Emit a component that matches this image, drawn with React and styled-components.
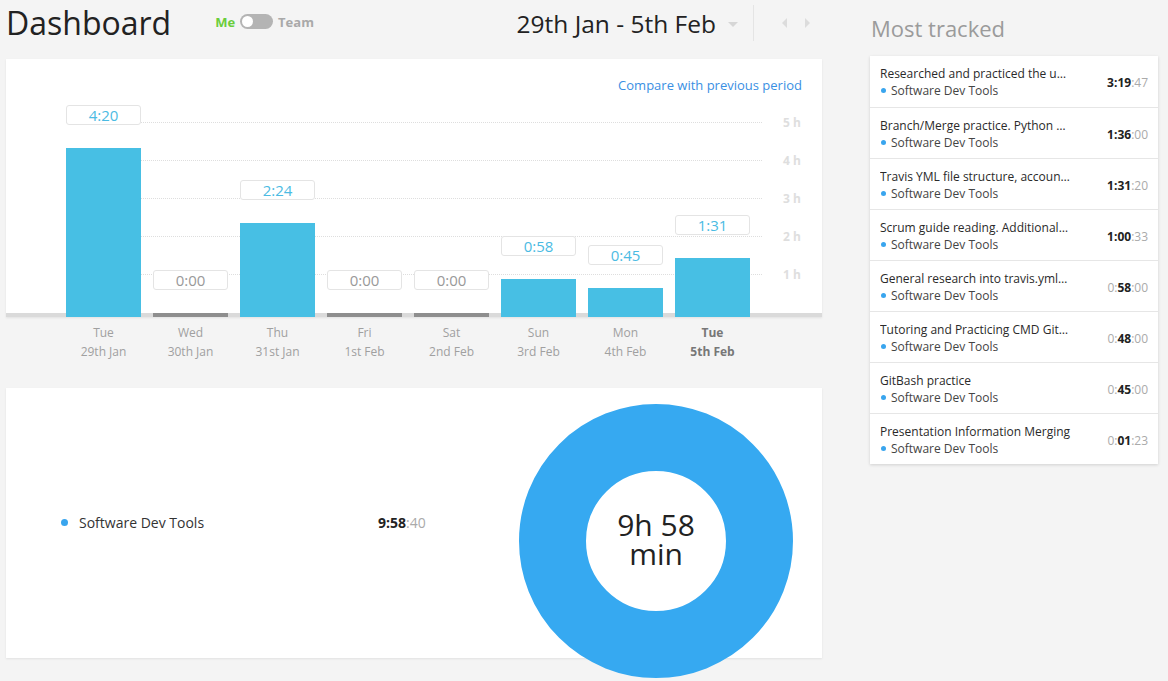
import React from 'react';
import styled, { createGlobalStyle } from 'styled-components';

const GlobalStyle = createGlobalStyle`
  html, body {
    margin: 0;
    padding: 0;
    background: #f4f4f4;
    font-family: 'Open Sans', 'Liberation Sans', sans-serif;
    color: #222;
  }
  #root {
    min-height: 100vh;
  }
`;

const days = [
  { day: 'Tue', date: '29th Jan', label: '4:20', hours: 4.333 },
  { day: 'Wed', date: '30th Jan', label: '0:00', hours: 0 },
  { day: 'Thu', date: '31st Jan', label: '2:24', hours: 2.4 },
  { day: 'Fri', date: '1st Feb', label: '0:00', hours: 0 },
  { day: 'Sat', date: '2nd Feb', label: '0:00', hours: 0 },
  { day: 'Sun', date: '3rd Feb', label: '0:58', hours: 0.967 },
  { day: 'Mon', date: '4th Feb', label: '0:45', hours: 0.75 },
  { day: 'Tue', date: '5th Feb', label: '1:31', hours: 1.517, current: true },
];

const tracked = [
  { title: 'Researched and practiced the u…', time: ['', '3:19', ':47'] },
  { title: 'Branch/Merge practice. Python …', time: ['', '1:36', ':00'] },
  { title: 'Travis YML file structure, accoun…', time: ['', '1:31', ':20'] },
  { title: 'Scrum guide reading. Additional…', time: ['', '1:00', ':33'] },
  { title: 'General research into travis.yml…', time: ['0:', '58', ':00'] },
  { title: 'Tutoring and Practicing CMD Git…', time: ['0:', '48', ':00'] },
  { title: 'GitBash practice', time: ['0:', '45', ':00'] },
  { title: 'Presentation Information Merging', time: ['0:', '01', ':23'] },
];

const Page = styled.div`
  display: flex;
  align-items: flex-start;
  padding-left: 6px;
  padding-bottom: 24px;
`;

const Main = styled.div`
  width: 816px;
`;

const Header = styled.header`
  height: 46px;
  display: flex;
  align-items: center;
  margin-bottom: 13px;
`;

const Title = styled.h1`
  margin: 0;
  font-size: 32px;
  line-height: 44px;
  font-weight: 400;
  color: #222;
`;

const Switcher = styled.div`
  display: flex;
  align-items: center;
  gap: 5px;
  margin-left: 44px;
  margin-top: -3px;
  font-size: 13px;
  font-weight: 700;
`;

const SwitchLabel = styled.span`
  color: ${p => (p.$active ? '#6acd3c' : '#a9a9a9')};
`;

const Toggle = styled.span`
  width: 33px;
  height: 15px;
  border-radius: 8px;
  background: #b4b4b4;
  display: flex;
  align-items: center;
  padding: 0 2px;
  box-sizing: border-box;
  &::before {
    content: '';
    width: 11px;
    height: 11px;
    border-radius: 50%;
    background: #fff;
  }
`;

const DateRange = styled.div`
  margin-left: auto;
  font-size: 24.5px;
  color: #222;
`;

const Caret = styled.span`
  margin-left: 12px;
  margin-top: 2px;
  width: 0;
  height: 0;
  border-left: 5px solid transparent;
  border-right: 5px solid transparent;
  border-top: 5px solid #d6d6d6;
`;

const Divider = styled.span`
  width: 1px;
  height: 36px;
  background: #e4e4e4;
  margin-left: 15px;
`;

const Nav = styled.div`
  display: flex;
  align-items: center;
  gap: 18px;
  margin-left: 28px;
  margin-right: 12px;
`;

const Arrow = styled.span`
  width: 0;
  height: 0;
  border-top: 5px solid transparent;
  border-bottom: 5px solid transparent;
  ${p => (p.$dir === 'left' ? 'border-right: 5px solid #dcdcdc;' : 'border-left: 5px solid #dcdcdc;')}
`;

const ChartCard = styled.section`
  background: linear-gradient(to top, #dadada 4px, #fff 4px);
  box-shadow: 0 1px 2px rgba(0, 0, 0, 0.08);
  padding: 18px 0 0 60px;
`;

const CompareRow = styled.div`
  display: flex;
  justify-content: flex-end;
  align-items: flex-start;
  padding-right: 20px;
  height: 18px;
  line-height: 16px;
`;

const CompareLink = styled.a`
  font-size: 13px;
  color: #3a8fe3;
  text-decoration: none;
`;

const Plot = styled.div`
  position: relative;
  height: 222px;
`;

const GridLine = styled.div`
  position: absolute;
  left: 0;
  width: 696px;
  border-top: 1px dotted #dedede;
`;

const AxisLabel = styled.span`
  position: absolute;
  left: 717px;
  font-size: 12px;
  font-weight: 700;
  color: #dedede;
  line-height: 14px;
`;

const Columns = styled.div`
  position: relative;
  height: 100%;
  display: flex;
  align-items: flex-end;
  gap: 12px;
`;

const Column = styled.div`
  width: 75px;
  display: flex;
  flex-direction: column;
  align-items: stretch;
`;

const ValueBox = styled.div`
  height: 18px;
  line-height: 18px;
  border: 1px solid #e4e4e4;
  border-radius: 3px;
  background: #fff;
  text-align: center;
  font-size: 15px;
  color: ${p => (p.$empty ? '#999' : '#4bbbe3')};
  margin-bottom: 23px;
`;

const Bar = styled.div`
  background: ${p => (p.$empty ? '#8e8e8e' : '#47bfe4')};
`;

const DayLabels = styled.div`
  display: flex;
  gap: 12px;
  padding: 6px 0 0 60px;
`;

const DayLabel = styled.div`
  width: 75px;
  text-align: center;
  font-size: 12px;
  line-height: 19px;
  color: ${p => (p.$current ? '#777' : '#a0a0a0')};
  font-weight: ${p => (p.$current ? 700 : 400)};
`;

const SummaryCard = styled.section`
  margin-top: 27px;
  height: 270px;
  background: #fff;
  box-shadow: 0 1px 2px rgba(0, 0, 0, 0.08);
  display: flex;
  align-items: center;
  padding-left: 55px;
  box-sizing: border-box;
  overflow: visible;
`;

const Legend = styled.div`
  display: grid;
  grid-template-columns: 7px 288px auto;
  column-gap: 11px;
  align-items: center;
  margin-top: -1px;
`;

const Dot = styled.span`
  width: ${p => p.$size || 7}px;
  height: ${p => p.$size || 7}px;
  border-radius: 50%;
  background: #39a5ee;
  display: inline-block;
`;

const LegendName = styled.span`
  font-size: 14px;
  color: #333;
`;

const Time = styled.span`
  font-size: ${p => p.$size || 13}px;
  color: #aaa;
  white-space: nowrap;
  b {
    color: #222;
    font-weight: 700;
  }
`;

const Donut = styled.div`
  position: relative;
  flex: none;
  margin-left: auto;
  margin-right: 29px;
  align-self: flex-start;
  margin-top: 16px;
  width: 274px;
  height: 274px;
  display: flex;
  flex-direction: column;
  align-items: center;
  justify-content: center;
  svg {
    position: absolute;
    left: 0;
    top: 0;
    overflow: visible;
  }
`;

const DonutLine = styled.div`
  position: relative;
  font-size: 30px;
  line-height: 29px;
  height: 29px;
  color: #222;
  &:first-of-type {
    margin-top: -5px;
  }
`;

const Side = styled.aside`
  width: 288px;
  margin-left: 48px;
`;

const SideTitle = styled.h2`
  margin: 13px 0 13px 1px;
  font-size: 22px;
  line-height: 30px;
  font-weight: 400;
  color: #9b9b9b;
`;

const List = styled.ul`
  list-style: none;
  margin: 0;
  padding: 0;
  background: #fff;
  box-shadow: 0 1px 3px rgba(0, 0, 0, 0.15);
`;

const Row = styled.li`
  height: 51px;
  box-sizing: border-box;
  padding: 9px 10px 0 10px;
  display: flex;
  align-items: flex-start;
  border-top: ${p => (p.$first ? 'none' : '1px solid #e6e6e6')};
`;

const RowText = styled.div`
  flex: 1;
  min-width: 0;
`;

const RowTitle = styled.div`
  font-size: 12px;
  line-height: 17px;
  color: #2a2a2a;
  max-width: 200px;
  white-space: nowrap;
  overflow: hidden;
  text-overflow: ellipsis;
`;

const RowProject = styled.div`
  display: flex;
  align-items: center;
  gap: 5px;
  font-size: 12px;
  line-height: 17px;
  color: #444;
  padding-left: 1px;
`;

const RowTime = styled(Time)`
  line-height: 17px;
  margin-top: 9px;
`;

const FormattedTime = ({ parts, size, as: Comp = Time }) => (
  <Comp $size={size}>
    {parts[0]}
    <b>{parts[1]}</b>
    {parts[2]}
  </Comp>
);

export default function App() {
  return (
    <>
      <GlobalStyle />
      <Page>
        <Main>
          <Header>
            <Title>Dashboard</Title>
            <Switcher>
              <SwitchLabel $active>Me</SwitchLabel>
              <Toggle />
              <SwitchLabel>Team</SwitchLabel>
            </Switcher>
            <DateRange>29th Jan - 5th Feb</DateRange>
            <Caret />
            <Divider />
            <Nav>
              <Arrow $dir="left" />
              <Arrow $dir="right" />
            </Nav>
          </Header>

          <ChartCard>
            <CompareRow>
              <CompareLink href="#">Compare with previous period</CompareLink>
            </CompareRow>
            <Plot>
              {[1, 2, 3, 4, 5].map(h => (
                <React.Fragment key={h}>
                  <GridLine style={{ bottom: 4 + 38 * h }} />
                  <AxisLabel style={{ bottom: 4 + 38 * h - 7 }}>{h} h</AxisLabel>
                </React.Fragment>
              ))}
              <Columns>
                {days.map((d, i) => (
                  <Column key={i}>
                    <ValueBox $empty={!d.hours}>{d.label}</ValueBox>
                    <Bar
                      $empty={!d.hours}
                      style={{ height: d.hours ? Math.round(d.hours * 39) : 4 }}
                    />
                  </Column>
                ))}
              </Columns>
            </Plot>
          </ChartCard>

          <DayLabels>
            {days.map((d, i) => (
              <DayLabel key={i} $current={d.current}>
                {d.day}
                <br />
                {d.date}
              </DayLabel>
            ))}
          </DayLabels>

          <SummaryCard>
            <Legend>
              <Dot />
              <LegendName>Software Dev Tools</LegendName>
              <FormattedTime parts={['', '9:58', ':40']} size={14} />
            </Legend>
            <Donut>
              <svg width="274" height="274" viewBox="0 0 274 274">
                <circle cx="137" cy="137" r="103.5" fill="none" stroke="#36a9f1" strokeWidth="67" />
              </svg>
              <DonutLine>9h 58</DonutLine>
              <DonutLine>min</DonutLine>
            </Donut>
          </SummaryCard>
        </Main>

        <Side>
          <SideTitle>Most tracked</SideTitle>
          <List>
            {tracked.map((t, i) => (
              <Row key={i} $first={i === 0}>
                <RowText>
                  <RowTitle>{t.title}</RowTitle>
                  <RowProject>
                    <Dot $size={5} />
                    Software Dev Tools
                  </RowProject>
                </RowText>
                <FormattedTime parts={t.time} size={12} as={RowTime} />
              </Row>
            ))}
          </List>
        </Side>
      </Page>
    </>
  );
}
